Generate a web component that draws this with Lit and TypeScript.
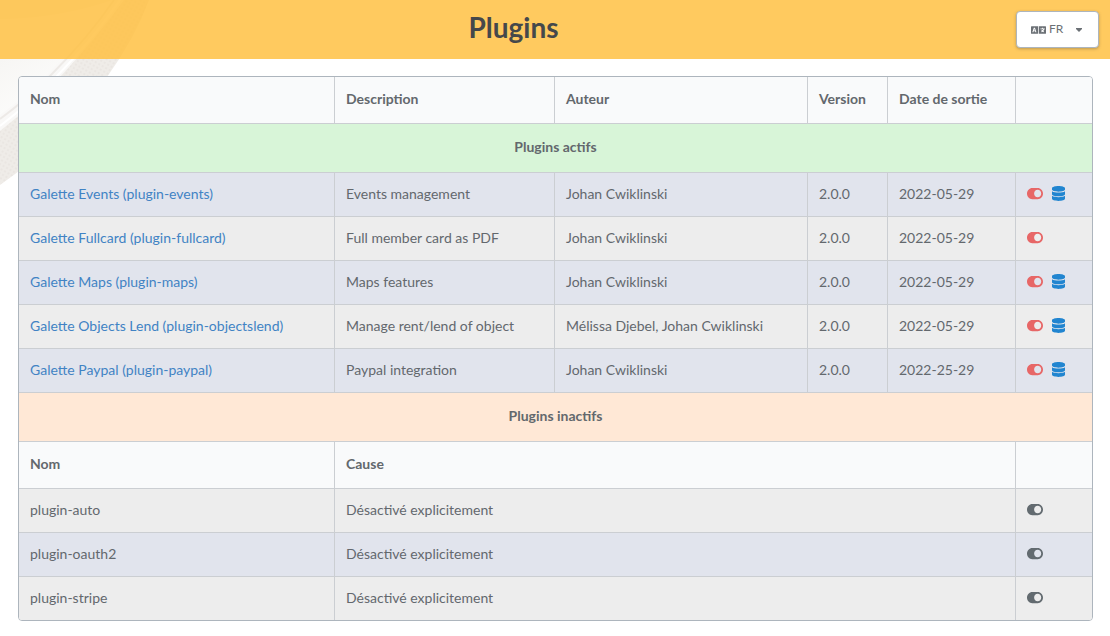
import { LitElement, html, css, svg } from "lit";
import { customElement, state } from "lit/decorators.js";

interface ActivePlugin {
  name: string;
  desc: string;
  author: string;
  version: string;
  date: string;
  db: boolean;
}

const author = "Johan Cwiklinski";

const active: ActivePlugin[] = [
  { name: "Galette Events (plugin-events)", desc: "Events management", author, version: "2.0.0", date: "2022-05-29", db: true },
  { name: "Galette Fullcard (plugin-fullcard)", desc: "Full member card as PDF", author, version: "2.0.0", date: "2022-05-29", db: false },
  { name: "Galette Maps (plugin-maps)", desc: "Maps features", author, version: "2.0.0", date: "2022-05-29", db: true },
  { name: "Galette Objects Lend (plugin-objectslend)", desc: "Manage rent/lend of object", author: "Mélissa Djebel, Johan Cwiklinski", version: "2.0.0", date: "2022-05-29", db: true },
  { name: "Galette Paypal (plugin-paypal)", desc: "Paypal integration", author, version: "2.0.0", date: "2022-25-29", db: true },
];

const inactive = ["plugin-auto", "plugin-oauth2", "plugin-stripe"];

const toggleIcon = svg`<svg class="toggle" viewBox="0 0 576 512" preserveAspectRatio="none" aria-hidden="true"><path fill="currentColor" d="M384 64H192C86 64 0 150 0 256s86 192 192 192h192c106 0 192-86 192-192S490 64 384 64zm0 320c-70.8 0-128-57.3-128-128 0-70.8 57.3-128 128-128 70.8 0 128 57.3 128 128 0 70.8-57.3 128-128 128z"/></svg>`;

const databaseIcon = svg`<svg class="database" viewBox="0 0 448 512" preserveAspectRatio="none" aria-hidden="true"><path fill="currentColor" d="M448 73.143v45.714C448 159.143 347.667 192 224 192S0 159.143 0 118.857V73.143C0 32.857 100.333 0 224 0s224 32.857 224 73.143zM448 176v102.857C448 319.143 347.667 352 224 352S0 319.143 0 278.857V176c48.125 33.143 136.208 48.572 224 48.572S399.874 209.143 448 176zm0 160v102.857C448 479.143 347.667 512 224 512S0 479.143 0 438.857V336c48.125 33.143 136.208 48.572 224 48.572S399.874 369.143 448 336z"/></svg>`;

const languageIcon = svg`<svg class="language" viewBox="0 0 640 512" aria-hidden="true"><path fill="currentColor" d="M152.1 236.2c-3.5-12.1-7.8-33.2-7.8-33.2h-.5s-4.3 21.1-7.8 33.2l-11.1 37.5H163zM616 96H336v320h280c13.3 0 24-10.7 24-24V120c0-13.3-10.7-24-24-24zm-24 120c0 6.6-5.4 12-12 12h-11.4c-6.9 23.6-21.7 47.4-42.7 69.9 8.4 6.4 17.1 12.5 26.1 18 5.5 3.4 7.3 10.5 4.1 16.2l-7.9 13.9c-3.4 5.9-10.9 7.8-16.7 4.3-12.6-7.8-24.5-16.1-35.4-24.9-10.9 8.7-22.7 17.1-35.4 24.9-5.8 3.5-13.3 1.6-16.7-4.3l-7.9-13.9c-3.2-5.6-1.4-12.8 4.2-16.2 9.3-5.7 18-11.7 26.1-18-7.9-8.4-14.9-17-21-25.7-4-5.7-2.2-13.6 3.7-17.1l6.5-3.9 7.3-4.3c5.4-3.2 12.4-1.7 16 3.4 5 7 10.8 14 17.4 20.9 13.5-14.2 23.8-28.9 30-43.2H412c-6.6 0-12-5.4-12-12v-16c0-6.6 5.4-12 12-12h64v-16c0-6.6 5.4-12 12-12h16c6.6 0 12 5.4 12 12v16h64c6.6 0 12 5.4 12 12zM0 120v272c0 13.3 10.7 24 24 24h280V96H24c-13.3 0-24 10.7-24 24zm58.9 216.1L116.4 167c1.7-4.9 6.2-8.1 11.4-8.1h32.5c5.1 0 9.7 3.3 11.4 8.1l57.5 169.1c2.6 7.8-3.1 15.9-11.4 15.9h-22.9a12 12 0 0 1-11.5-8.6l-9.4-31.9h-60.2l-9.1 31.8c-1.5 5.1-6.2 8.7-11.5 8.7H70.3c-8.2 0-14-8.1-11.4-15.9z"/></svg>`;

const backdrop = svg`<svg class="backdrop" viewBox="0 0 160 200" aria-hidden="true">
  <defs>
    <linearGradient id="plate" gradientUnits="userSpaceOnUse" x1="0" y1="60" x2="30" y2="110">
      <stop offset="0" stop-color="#f7f6f4"/>
      <stop offset="1" stop-color="#fcfcfb"/>
    </linearGradient>
    <pattern id="weave" width="4" height="4" patternUnits="userSpaceOnUse" patternTransform="rotate(30)">
      <rect width="4" height="4" fill="#efece8"/>
      <circle cx="2" cy="2" r="1" fill="#e9e5e0"/>
    </pattern>
  </defs>
  <path fill="url(#weave)" d="M0 0H149Q135 38 107 77Q62 142 0 185Z"/>
  <path fill="#f9f8f7" d="M0 0H124Q98 36 61 76Q32 106 0 131Z"/>
  <path fill="url(#plate)" d="M0 0H110Q84 38 46 76Q25 97 0 115Z"/>
  <path fill="none" stroke="#edeae7" stroke-width="2" d="M114 0Q88 38 50 76Q27 99 0 119"/>
  <path fill="none" stroke="#fff" stroke-width="2" d="M120 0Q94 38 57 76Q30 103 0 126"/>
  <path fill="#ece9e5" fill-opacity=".6" d="M0 0H112Q60 18 0 19Z"/>
</svg>`;

@customElement("app-root")
export class AppRoot extends LitElement {
  static styles = css`
    :host {
      display: block;
      position: relative;
      isolation: isolate;
      font: 14px/20px Lato, "Liberation Sans", sans-serif;
      color: #63686d;
      background: #fff;
    }
    .backdrop {
      position: absolute;
      z-index: -1;
      top: 0;
      left: 0;
      width: 160px;
      height: 200px;
    }
    .bar {
      display: flex;
      align-items: center;
      min-height: 59px;
      box-sizing: border-box;
      padding: 0 11px;
      background: rgba(255, 192, 64, 0.84);
    }
    .title {
      flex: 1;
      margin: 0 0 6px;
      text-align: center;
      font-size: 28px;
      line-height: 36px;
      font-weight: 700;
      color: #45484b;
    }
    .lang {
      display: flex;
      align-items: center;
      box-sizing: border-box;
      height: 37px;
      padding: 0 14px;
      border: 1px solid #adb5bd;
      border-radius: 4px;
      background: #fff;
      box-shadow: 0 1px 3px rgba(60, 60, 60, 0.35);
      color: #6b7075;
      cursor: pointer;
    }
    .lang select {
      appearance: none;
      width: 27px;
      margin: 0 0 2px 3px;
      padding: 0;
      border: 0;
      background: none;
      color: inherit;
      font: 12px/16px Lato, "Liberation Sans", sans-serif;
      cursor: pointer;
    }
    .language {
      width: 15px;
      height: 12px;
    }
    .caret {
      width: 6px;
      height: 4px;
      margin-right: 2px;
    }
    main {
      padding: 17px 17px 15px 18px;
    }
    table {
      width: 100%;
      table-layout: fixed;
      border: 1px solid #adb5bd;
      border-radius: 4px;
      border-spacing: 0;
      overflow: hidden;
    }
    .c-name { width: 315px; }
    .c-desc { width: 220px; }
    .c-author { width: 253px; }
    .c-version { width: 80px; }
    .c-date { width: 128px; }
    .c-actions { width: 77px; }
    th, td {
      padding: 11px 11px 12px;
      border-left: 1px solid #cbced2;
      border-bottom: 1px solid #cbced2;
      text-align: left;
      vertical-align: top;
    }
    th {
      padding: 12px 11px 14px;
      background: #f9fafb;
      font-weight: 700;
    }
    th:first-child, td:first-child {
      border-left: 0;
    }
    tbody:last-child tr:last-child td {
      border-bottom: 0;
    }
    .section th {
      padding: 13px 11px 15px;
      text-align: center;
    }
    .on th { background: #d8f5d8; }
    .off th { background: #ffe8d6; }
    .blue td { background: #e1e4ed; }
    .grey td { background: #ededed; }
    a {
      color: #4183c4;
      text-decoration: none;
    }
    .actions {
      display: flex;
      align-items: center;
      gap: 9px;
      height: 19px;
    }
    .actions button {
      display: flex;
      padding: 0;
      border: 0;
      background: none;
      color: #636b70;
      cursor: pointer;
    }
    .actions .disable { color: #e76767; }
    .actions .base { color: #2185d0; }
    .toggle {
      width: 16px;
      height: 15px;
    }
    .database {
      width: 13px;
      height: 15px;
    }
  `;

  @state() private lang = "FR";

  private pick(e: Event) {
    this.lang = (e.target as HTMLSelectElement).value;
  }

  render() {
    return html`
      ${backdrop}
      <header class="bar">
        <h1 class="title">Plugins</h1>
        <label class="lang">
          ${languageIcon}
          <select aria-label="Langue" .value=${this.lang} @change=${this.pick}>
            <option>FR</option>
          </select>
          <svg class="caret" viewBox="0 0 6 4" aria-hidden="true"><path fill="currentColor" d="M0 0h6v1L3 4 0 1z"/></svg>
        </label>
      </header>
      <main>
        <table>
          <colgroup>
            <col class="c-name" /><col class="c-desc" /><col class="c-author" />
            <col class="c-version" /><col class="c-date" /><col class="c-actions" />
          </colgroup>
          <thead>
            <tr>
              <th>Nom</th><th>Description</th><th>Auteur</th>
              <th>Version</th><th>Date de sortie</th><th></th>
            </tr>
          </thead>
          <tbody>
            <tr class="section on"><th colspan="6">Plugins actifs</th></tr>
            ${active.map((p, i) => html`
              <tr class=${i % 2 ? "grey" : "blue"}>
                <td><a href="#">${p.name}</a></td>
                <td>${p.desc}</td>
                <td>${p.author}</td>
                <td>${p.version}</td>
                <td>${p.date}</td>
                <td>
                  <div class="actions">
                    <button class="disable" aria-label="Désactiver">${toggleIcon}</button>
                    ${p.db ? html`<button class="base" aria-label="Base de données">${databaseIcon}</button>` : ""}
                  </div>
                </td>
              </tr>`)}
          </tbody>
          <tbody>
            <tr class="section off"><th colspan="6">Plugins inactifs</th></tr>
            <tr><th>Nom</th><th colspan="4">Cause</th><th></th></tr>
            ${inactive.map((name, i) => html`
              <tr class=${i % 2 ? "blue" : "grey"}>
                <td>${name}</td>
                <td colspan="4">Désactivé explicitement</td>
                <td>
                  <div class="actions">
                    <button aria-label="Activer">${toggleIcon}</button>
                  </div>
                </td>
              </tr>`)}
          </tbody>
        </table>
      </main>
    `;
  }
}
